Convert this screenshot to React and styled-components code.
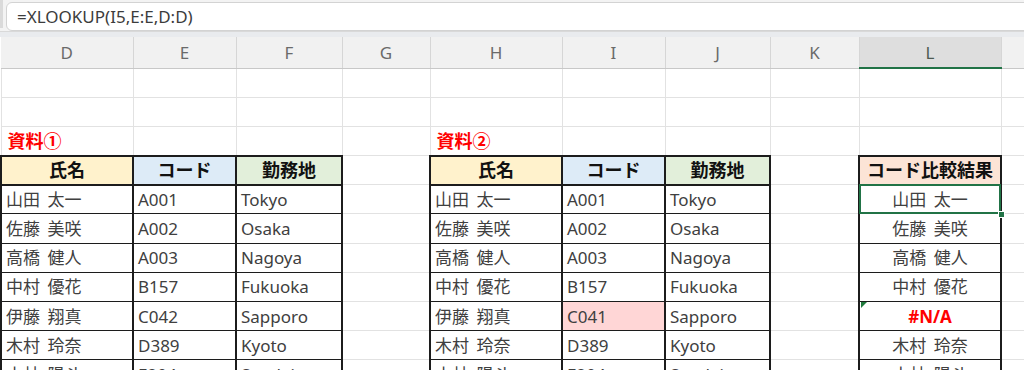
import React from 'react';
import styled, { createGlobalStyle, css } from 'styled-components';

const GRID = '#e2e2e2';
const THIN = '1px solid #1c1c1c';
const THICK = '2px solid #1c1c1c';
const GREEN = '#217346';

const COLUMNS = [
  { id: 'D', width: 132 },
  { id: 'E', width: 103 },
  { id: 'F', width: 106 },
  { id: 'G', width: 88 },
  { id: 'H', width: 132 },
  { id: 'I', width: 103 },
  { id: 'J', width: 105 },
  { id: 'K', width: 89 },
  { id: 'L', width: 142 },
  { id: 'M', width: 60 },
];
const ACTIVE_COL = 'L';

const PEOPLE = [
  { name: '山田 太一', code: 'A001', place: 'Tokyo' },
  { name: '佐藤 美咲', code: 'A002', place: 'Osaka' },
  { name: '高橋 健人', code: 'A003', place: 'Nagoya' },
  { name: '中村 優花', code: 'B157', place: 'Fukuoka' },
  { name: '伊藤 翔真', code: 'C042', place: 'Sapporo' },
  { name: '木村 玲奈', code: 'D389', place: 'Kyoto' },
  { name: '小林 陽斗', code: 'E204', place: 'Sendai' },
];

const HEAD = {
  name: { text: '氏名', bg: '#fff2cc' },
  code: { text: 'コード', bg: '#ddebf7' },
  place: { text: '勤務地', bg: '#e2efda' },
  result: { text: 'コード比較結果', bg: '#fce4d6' },
};

const TABLES = [
  { start: 0, label: '資料①', fields: ['name', 'code', 'place'], source: PEOPLE },
  {
    start: 4,
    label: '資料②',
    fields: ['name', 'code', 'place'],
    source: PEOPLE.map((p, i) => (i === 4 ? { ...p, code: 'C041', flag: true } : p)),
  },
  {
    start: 8,
    fields: ['result'],
    source: PEOPLE.map((p, i) => ({ result: i === 4 ? '#N/A' : p.name, error: i === 4 })),
  },
];

const LABEL_ROW = 2;
const HEAD_ROW = 3;
const FIRST_DATA = 4;
const ROW_COUNT = 11;

const Global = createGlobalStyle`
  html, body { margin: 0; padding: 0; background: #fff; overflow: hidden; }
  body { font-family: "Noto Sans", "Noto Sans CJK JP", sans-serif; }
  #root { width: 1024px; height: 370px; overflow: hidden; }
`;

const Window = styled.div`
  width: 1024px;
  height: 370px;
  overflow: hidden;
  display: flex;
  flex-direction: column;
  background: #fff;
`;

const FormulaBar = styled.div`
  flex: none;
  height: 32px;
  display: flex;
  align-items: flex-start;
  gap: 3px;
  background: #f3f3f3;
  border-bottom: 1px solid #d9d9d9;
  box-sizing: border-box;
`;

const NameBoxEdge = styled.div`
  width: 3px;
  height: 28px;
  background: #dadada;
`;

const FormulaInput = styled.div`
  flex: 1;
  margin-top: 2px;
  margin-right: -12px;
  height: 29px;
  box-sizing: border-box;
  display: flex;
  align-items: center;
  padding-left: 10px;
  background: #fff;
  border: 1px solid #d3d3d3;
  border-radius: 6px;
  font-family: "Noto Sans", sans-serif;
  font-size: 17px;
  color: #3c3c3c;
`;

const HeaderBand = styled.div`
  flex: none;
  height: 5px;
  background: #e9ebee;
`;

const Viewport = styled.div`
  flex: 1;
  overflow: hidden;
`;

const Sheet = styled.table`
  border-collapse: collapse;
  table-layout: fixed;
  width: ${COLUMNS.reduce((s, c) => s + c.width, 0)}px;
`;

const ColHead = styled.th`
  height: 30px;
  padding: 0;
  background: ${p => (p.$active ? '#dedede' : '#f1f1f1')};
  border-right: 1px solid #d6d6d6;
  border-bottom: ${p => (p.$active ? `2px solid ${GREEN}` : '1px solid #c8c8c8')};
  font-family: "Noto Sans", sans-serif;
  font-size: 17px;
  font-weight: 400;
  color: ${p => (p.$active ? '#4d5a52' : '#6a6a6a')};
  text-align: center;
  vertical-align: middle;
`;

const variants = {
  plain: css`
    color: #404040;
    text-align: left;
  `,
  label: css`
    color: #ff0000;
    font-weight: 700;
    font-size: 18px;
    padding-left: 6px;
  `,
  head: css`
    color: #111;
    font-weight: 700;
    font-size: 18px;
    text-align: center;
  `,
  center: css`
    color: #404040;
    text-align: center;
  `,
  error: css`
    color: #ff0000;
    font-weight: 700;
    text-align: center;
  `,
};

const Cell = styled.td`
  height: 29.2px;
  padding: 0 4px;
  box-sizing: border-box;
  position: relative;
  white-space: nowrap;
  overflow: visible;
  vertical-align: middle;
  line-height: 1;
  font-size: 17px;
  word-spacing: 3px;
  background: ${p => p.$bg || '#fff'};
  border: 1px solid ${GRID};
  ${({ $frame }) =>
    $frame &&
    css`
      border-top: ${$frame.top};
      border-right: ${$frame.right};
      border-bottom: ${$frame.bottom};
      border-left: ${$frame.left};
    `}
  ${p => variants[p.$variant || 'plain']}
  ${p =>
    p.$selected &&
    css`
      &::after {
        content: '';
        position: absolute;
        top: -2px;
        left: -1px;
        right: -1px;
        bottom: -1px;
        border: 2px solid ${GREEN};
        pointer-events: none;
      }
    `}
  ${p =>
    p.$flagged &&
    css`
      &::before {
        content: '';
        position: absolute;
        top: 0;
        left: 1px;
        width: 0;
        height: 0;
        border-top: 6px solid #1f7a3c;
        border-right: 6px solid transparent;
      }
    `}
`;

const FillHandle = styled.span`
  position: absolute;
  right: -5px;
  bottom: -5px;
  width: 5px;
  height: 5px;
  background: ${GREEN};
  border: 1px solid #fff;
  z-index: 2;
`;

function frameFor(row) {
  return {
    left: THICK,
    right: THICK,
    top: row === HEAD_ROW || row === FIRST_DATA ? THICK : THIN,
    bottom: row === HEAD_ROW ? THICK : THIN,
  };
}

function cellFor(row, col) {
  for (const t of TABLES) {
    const idx = col - t.start;
    if (row === LABEL_ROW && idx === 0 && t.label) {
      return { variant: 'label', content: t.label };
    }
    if (idx < 0 || idx >= t.fields.length || row < HEAD_ROW) continue;
    const field = t.fields[idx];
    const frame = frameFor(row);
    if (row === HEAD_ROW) {
      return { variant: 'head', content: HEAD[field].text, bg: HEAD[field].bg, frame };
    }
    const rec = t.source[row - FIRST_DATA];
    if (field === 'result') {
      return {
        variant: rec.error ? 'error' : 'center',
        content: rec.result,
        frame,
        selected: row === FIRST_DATA,
        flagged: rec.error,
      };
    }
    return {
      variant: 'plain',
      content: rec[field],
      frame,
      bg: field === 'code' && rec.flag ? '#ffd6d6' : undefined,
    };
  }
  return { content: '' };
}

export default function App() {
  const rows = Array.from({ length: ROW_COUNT }, (_, r) => r);
  return (
    <>
      <Global />
      <Window>
        <FormulaBar>
          <NameBoxEdge />
          <FormulaInput>=XLOOKUP(I5,E:E,D:D)</FormulaInput>
        </FormulaBar>
        <HeaderBand />
        <Viewport>
          <Sheet>
            <colgroup>
              {COLUMNS.map(c => (
                <col key={c.id} style={{ width: c.width }} />
              ))}
            </colgroup>
            <thead>
              <tr>
                {COLUMNS.map(c => (
                  <ColHead key={c.id} $active={c.id === ACTIVE_COL}>
                    {c.id}
                  </ColHead>
                ))}
              </tr>
            </thead>
            <tbody>
              {rows.map(r => (
                <tr key={r}>
                  {COLUMNS.map((c, ci) => {
                    const cell = cellFor(r, ci);
                    return (
                      <Cell
                        key={c.id}
                        $variant={cell.variant}
                        $frame={cell.frame}
                        $bg={cell.bg}
                        $selected={cell.selected}
                        $flagged={cell.flagged}
                      >
                        {cell.content}
                        {cell.selected && <FillHandle />}
                      </Cell>
                    );
                  })}
                </tr>
              ))}
            </tbody>
          </Sheet>
        </Viewport>
      </Window>
    </>
  );
}
